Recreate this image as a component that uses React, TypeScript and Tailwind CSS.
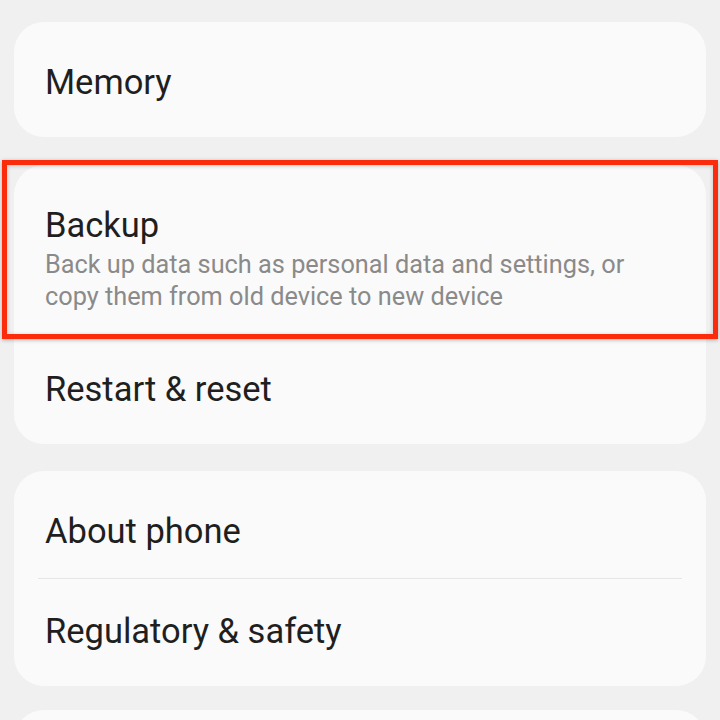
import React from 'react';

const font = { fontFamily: 'Roboto, "Noto Sans", sans-serif' };

const Row: React.FC<{ title: string; sub?: string; className?: string }> = ({ title, sub, className }) => (
  <div className={className ?? 'px-[31px] pt-[32px] pb-[27px]'}>
    <div className="text-[34.5px] leading-[40px] text-[#1f1f1f]">{title}</div>
    {sub && <div className="mt-[4px] text-[25.3px] leading-[32px] text-[#8a8a8a]">{sub}</div>}
  </div>
);

export default function App() {
  return (
    <div className="w-[720px] h-[720px] overflow-hidden bg-[#f0f0f0] px-[14px] pt-[22px]" style={font}>
      <div className="flex flex-col">
        {/* Memory */}
        <div className="rounded-[30px] bg-[#fafafa] py-[8px]">
          <Row title="Memory" />
        </div>

        {/* Backup + Restart */}
        <div className="relative mt-[28px] rounded-[30px] bg-[#fafafa] py-[8px]">
          <Row
            title="Backup"
            sub="Back up data such as personal data and settings, or copy them from old device to new device"
            className="px-[31px] pt-[32px] pb-[24px]"
          />
          <Row title="Restart & reset" />
          {/* highlight */}
          <div className="absolute -top-[5px] -left-[12px] w-[716px] h-[179px] border-[5px] border-[#fb2c0c] shadow-[0_1px_4px_rgba(0,0,0,0.3),inset_0_1px_4px_rgba(0,0,0,0.2)]" />
        </div>

        {/* About */}
        <div className="mt-[27px] rounded-[30px] bg-[#fafafa] py-[8px]">
          <Row title="About phone" />
          <div className="mx-[24px] h-px bg-[#e6e6e6]" />
          <Row title="Regulatory & safety" />
        </div>

        <div className="mt-[24px] rounded-[30px] bg-[#fafafa] h-[100px]" />
      </div>
    </div>
  );
}
